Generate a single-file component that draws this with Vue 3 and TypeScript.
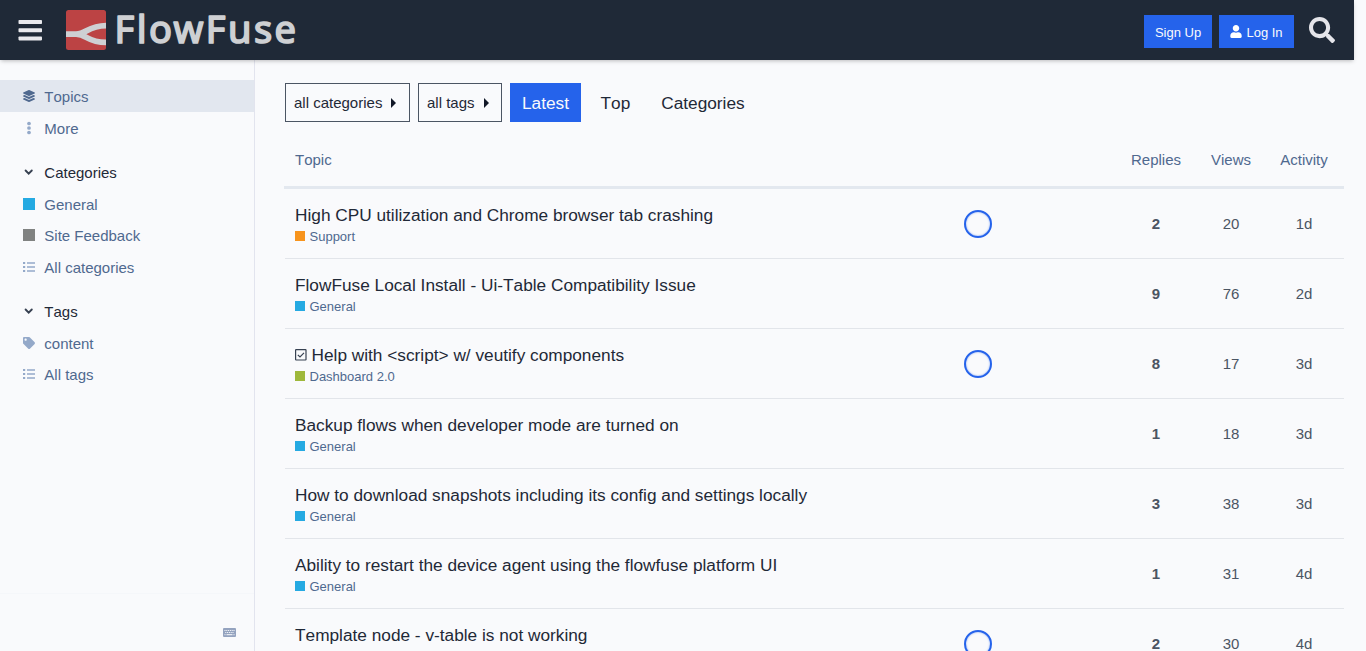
<script setup lang="ts">
interface SideLink {
  label: string
  icon: 'layers' | 'dots' | 'square' | 'list' | 'tag'
  color?: string
  active?: boolean
}
interface SideSection {
  title?: string
  links: SideLink[]
}
interface Topic {
  title: string
  category: string
  color: string
  replies: number
  views: number
  activity: string
  solved?: boolean
  poster?: boolean
}

const blue = '#25aae2'

const sections: SideSection[] = [
  {
    links: [
      { label: 'Topics', icon: 'layers', active: true },
      { label: 'More', icon: 'dots' },
    ],
  },
  {
    title: 'Categories',
    links: [
      { label: 'General', icon: 'square', color: blue },
      { label: 'Site Feedback', icon: 'square', color: '#808281' },
      { label: 'All categories', icon: 'list' },
    ],
  },
  {
    title: 'Tags',
    links: [
      { label: 'content', icon: 'tag' },
      { label: 'All tags', icon: 'list' },
    ],
  },
]

const topics: Topic[] = [
  { title: 'High CPU utilization and Chrome browser tab crashing', category: 'Support', color: '#f7941d', replies: 2, views: 20, activity: '1d', poster: true },
  { title: 'FlowFuse Local Install - Ui-Table Compatibility Issue', category: 'General', color: blue, replies: 9, views: 76, activity: '2d' },
  { title: 'Help with <script> w/ veutify components', category: 'Dashboard 2.0', color: '#9eb83b', replies: 8, views: 17, activity: '3d', solved: true, poster: true },
  { title: 'Backup flows when developer mode are turned on', category: 'General', color: blue, replies: 1, views: 18, activity: '3d' },
  { title: 'How to download snapshots including its config and settings locally', category: 'General', color: blue, replies: 3, views: 38, activity: '3d' },
  { title: 'Ability to restart the device agent using the flowfuse platform UI', category: 'General', color: blue, replies: 1, views: 31, activity: '4d' },
  { title: 'Template node - v-table is not working', category: 'General', color: blue, replies: 2, views: 30, activity: '4d', poster: true },
]
</script>

<template>
  <div class="page">
    <header class="top">
      <svg class="burger" viewBox="0 0 24 22">
        <rect x="0.5" y="1" width="23.5" height="4" rx="0.8" />
        <rect x="0.5" y="9.2" width="23.5" height="4" rx="0.8" />
        <rect x="0.5" y="17.4" width="23.5" height="4" rx="0.8" />
      </svg>
      <svg class="logo" viewBox="0 0 240 40">
        <rect width="40" height="40" rx="2.5" fill="#e84b48" />
        <path d="M0 24.200H10C20 24.200 22 15.800 40 15.600M10 24.200C21 24.200 21 32.300 40 32.300" fill="none" stroke="#fff" stroke-width="5.800" />
        <text x="48.500" y="33.300" textLength="181.500" lengthAdjust="spacing" class="wordmark">FlowFuse</text>
      </svg>
      <div class="actions">
        <button class="btn signup">Sign Up</button>
        <button class="btn login">
          <svg class="user" viewBox="0 0 448 512"><path d="M224 256c70.700 0 128-57.300 128-128S294.700 0 224 0 96 57.300 96 128s57.300 128 128 128zm89.600 32h-16.700c-22.200 10.200-46.900 16-72.900 16s-50.600-5.800-72.900-16h-16.700C60.200 288 0 348.200 0 422.400V464c0 26.500 21.500 48 48 48h352c26.500 0 48-21.500 48-48v-41.600c0-74.200-60.200-134.400-134.400-134.400z" /></svg>
          Log In
        </button>
        <svg class="search" viewBox="0 0 512 512"><path d="M505 442.700L405.300 343c-4.500-4.500-10.600-7-17-7H372c27.600-35.300 44-79.700 44-128C416 93.100 322.900 0 208 0S0 93.100 0 208s93.100 208 208 208c48.300 0 92.700-16.400 128-44v16.300c0 6.400 2.500 12.500 7 17l99.700 99.700c9.400 9.400 24.600 9.400 33.900 0l28.300-28.300c9.400-9.400 9.400-24.600.1-34zM208 336c-70.700 0-128-57.200-128-128 0-70.700 57.200-128 128-128 70.700 0 128 57.200 128 128 0 70.700-57.200 128-128 128z" /></svg>
      </div>
    </header>

    <div class="body">
      <nav class="side">
        <div v-for="(s, i) in sections" :key="i" class="section">
          <div v-if="s.title" class="item heading">
            <svg class="icon caret" viewBox="0 0 12 12"><path d="M2.600 4.500 5.700 7.600 8.800 4.500" fill="none" stroke="currentColor" stroke-width="1.900" stroke-linecap="round" /></svg>
            <span>{{ s.title }}</span>
          </div>
          <div v-for="l in s.links" :key="l.label" class="item" :class="{ active: l.active }">
            <svg v-if="l.icon === 'layers'" class="icon" viewBox="0 0 512 512"><path d="M12.410 148.020l232.940 105.670c6.800 3.090 14.490 3.090 21.290 0l232.940-105.670c16.550-7.510 16.550-32.520 0-40.030L266.650 2.310a25.607 25.607 0 0 0-21.290 0L12.410 107.980c-16.550 7.510-16.550 32.530 0 40.040zm487.180 88.280l-58.090-26.330-161.640 73.270c-7.560 3.430-15.590 5.170-23.860 5.170s-16.290-1.740-23.860-5.170L70.510 209.970l-58.100 26.330c-16.550 7.500-16.550 32.500 0 40l232.940 105.590c6.800 3.080 14.490 3.080 21.290 0L499.590 276.300c16.550-7.500 16.550-32.500 0-40zm0 127.800l-57.870-26.230-161.860 73.370c-7.560 3.430-15.590 5.170-23.860 5.170s-16.290-1.740-23.860-5.170L70.290 337.870 12.410 364.100c-16.550 7.500-16.550 32.500 0 40l232.940 105.590c6.800 3.080 14.490 3.080 21.290 0L499.590 404.100c16.550-7.500 16.550-32.500 0-40z" /></svg>
            <svg v-else-if="l.icon === 'dots'" class="icon" viewBox="0 0 12 12"><circle cx="6" cy="1.500" r="1.850" /><circle cx="6" cy="6" r="1.850" /><circle cx="6" cy="10.500" r="1.850" /></svg>
            <span v-else-if="l.icon === 'square'" class="square" :style="{ background: l.color }"></span>
            <svg v-else-if="l.icon === 'list'" class="icon" viewBox="0 0 12 12"><path d="M0 1h2.200v2H0zM0 5h2.200v2H0zM0 9h2.200v2H0zM4 1.300h8v1.400H4zM4 5.300h8v1.400H4zM4 9.300h8v1.400H4z" /></svg>
            <svg v-else class="icon" viewBox="0 0 512 512"><path d="M0 252.118V48C0 21.490 21.490 0 48 0h204.118a48 48 0 0 1 33.941 14.059l211.882 211.882c18.745 18.745 18.745 49.137 0 67.882L293.823 497.941c-18.745 18.745-49.137 18.745-67.882 0L14.059 286.059A48 48 0 0 1 0 252.118zM112 64c-26.510 0-48 21.490-48 48s21.490 48 48 48 48-21.490 48-48-21.490-48-48-48z" /></svg>
            <span>{{ l.label }}</span>
          </div>
        </div>
        <div class="side-foot">
          <svg class="keyboard" viewBox="0 0 13 9">
            <rect width="13" height="9" rx="1" />
            <path d="M1.500 2.500h10M2.300 4.500h8.700" stroke="#f9fafc" stroke-width="1" stroke-dasharray="1 .8" />
            <path d="M1.500 6.700h1M3.500 6.700h6M10.500 6.700h1" stroke="#f9fafc" stroke-width="1" />
          </svg>
        </div>
      </nav>

      <main class="main">
        <div class="filters">
          <button class="drop cats">all categories<i class="tri"></i></button>
          <button class="drop tags">all tags<i class="tri"></i></button>
          <a class="pill current">Latest</a>
          <a class="pill top-link">Top</a>
          <a class="pill">Categories</a>
        </div>
        <div class="row head">
          <span class="topic">Topic</span>
          <span></span>
          <span class="num">Replies</span>
          <span class="num">Views</span>
          <span class="num">Activity</span>
        </div>
        <div v-for="t in topics" :key="t.title" class="row entry">
          <div class="topic">
            <div class="title">
              <svg v-if="t.solved" class="check" viewBox="0 0 12 12"><rect x="0.600" y="0.600" width="10.400" height="10.400" rx="0.500" /><path d="M2.800 5.800 5 8 9 3.900" /></svg>{{ t.title }}
            </div>
            <div class="cat"><span class="badge" :style="{ background: t.color }"></span>{{ t.category }}</div>
          </div>
          <div><span v-if="t.poster" class="ring"></span></div>
          <span class="num strong">{{ t.replies }}</span>
          <span class="num">{{ t.views }}</span>
          <span class="num">{{ t.activity }}</span>
        </div>
      </main>
    </div>
  </div>
</template>

<style>
html,
body {
  background: #f9fafc;
  overflow: hidden;
}
</style>

<style scoped>
.page {
  height: 651px;
  overflow: hidden;
  display: flex;
  flex-direction: column;
  background: #f9fafc;
  color: #1f2937;
  font: 15px/1.4 'Liberation Sans', Arial, sans-serif;
  font-kerning: none;
}
.top {
  position: relative;
  flex: none;
  width: 1354px;
  height: 60px;
  box-sizing: border-box;
  padding: 0 18px;
  display: flex;
  align-items: center;
  background: #1f2937;
  box-shadow: 0 2px 4px -1px rgba(0, 0, 0, 0.25);
}
.burger {
  width: 24px;
  height: 22px;
  fill: #e9e9ed;
}
.logo {
  width: 240px;
  height: 40px;
  margin-left: 24px;
  opacity: 0.78;
  overflow: visible;
}
.wordmark {
  font: 400 38px/1 'Noto Sans', 'Open Sans', sans-serif;
  fill: #fff;
  stroke: #fff;
  stroke-width: 1.7;
  stroke-linejoin: round;
}
.actions {
  margin-left: auto;
  display: flex;
  align-items: center;
}
.btn {
  height: 33px;
  margin: 3px 7px 0 0;
  padding: 1px 0 0;
  border: 0;
  display: flex;
  align-items: center;
  justify-content: center;
  background: #2563eb;
  color: #f9fafc;
  font: 13px 'Liberation Sans', Arial, sans-serif;
}
.signup {
  width: 68px;
}
.login {
  width: 75px;
}
.user {
  width: 12px;
  height: 13px;
  margin: -2px 4px 0 0;
  fill: #fff;
}
.search {
  width: 26px;
  height: 26px;
  margin: 0 1px 0 8px;
  fill: #e5e5ea;
}
.body {
  flex: 1;
  min-height: 0;
  display: flex;
}
.side {
  width: 255px;
  box-sizing: border-box;
  padding-top: 20px;
  border-right: 1px solid #e2e4ee;
  display: flex;
  flex-direction: column;
}
.section {
  margin-bottom: 13px;
}
.item {
  height: 31.5px;
  box-sizing: border-box;
  padding: 2px 0 0 23px;
  display: flex;
  align-items: center;
  gap: 9.3px;
  color: #4f698f;
}
.item.heading {
  color: #1f2937;
}
.item.active {
  background: #e2e7ef;
}
.icon {
  width: 12px;
  height: 12px;
  margin-top: -1px;
  fill: #94a9c9;
  overflow: visible;
}
.caret {
  margin-top: -2px;
  color: #374151;
}
.active .icon {
  margin-top: -2px;
  fill: #4f698f;
}
.square {
  width: 12px;
  height: 12px;
  margin-top: -1.5px;
}
.side-foot {
  margin-top: auto;
  height: 58px;
  padding: 38px 18px 0 0;
  box-sizing: border-box;
  border-top: 1px solid #f5f7fa;
  display: flex;
  justify-content: flex-end;
}
.keyboard {
  width: 13px;
  height: 9px;
  fill: #94a3bf;
  margin-top: -4px;
}
.main {
  width: 1059px;
  padding: 23px 0 0 30px;
}
.filters {
  display: flex;
  height: 39px;
}
.drop {
  height: 39px;
  box-sizing: border-box;
  margin-right: 8px;
  padding: 0 0 0 8px;
  display: flex;
  align-items: center;
  border: 1px solid #4b5563;
  background: none;
  color: #1f2937;
  font: 15px 'Liberation Sans', Arial, sans-serif;
}
.cats {
  width: 125px;
}
.tags {
  width: 84px;
}
.tri {
  margin-left: 9px;
  border-left: 5px solid #111827;
  border-top: 5px solid transparent;
  border-bottom: 5px solid transparent;
}
.pill {
  padding: 1px 12px 0;
  display: flex;
  align-items: center;
  font-size: 17.25px;
}
.pill.current {
  width: 71px;
  box-sizing: border-box;
  background: #2563eb;
  color: #f9fafc;
}
.top-link {
  margin: 0 7px 0 7.5px;
}
.row {
  display: grid;
  grid-template-columns: 679px 155px 74px 76px 75px;
  align-items: center;
}
.head {
  height: 67px;
  margin-left: -1px;
  padding: 10px 0 0 1px;
  box-sizing: border-box;
  border-bottom: 3px solid #e3e8ef;
  color: #4f698f;
}
.entry {
  height: 70px;
  box-sizing: border-box;
  border-bottom: 1px solid #e2e5ea;
  color: #4b5563;
}
.topic {
  padding-left: 10px;
}
.entry .topic {
  padding-top: 2px;
}
.title {
  height: 25px;
  line-height: 25px;
  font-size: 17.25px;
  color: #1f2937;
  white-space: nowrap;
}
.check {
  width: 12px;
  height: 12px;
  margin-right: 4.5px;
  fill: none;
  stroke: #374151;
  stroke-width: 1.2;
}
.cat {
  height: 18px;
  display: flex;
  align-items: center;
  gap: 4.5px;
  font-size: 13px;
  color: #4f698f;
}
.badge {
  width: 10px;
  height: 10px;
  margin-top: -2px;
}
.num {
  text-align: center;
}
.num:last-child {
  padding-right: 5px;
}
.strong {
  font-weight: bold;
}
.ring {
  display: block;
  width: 28px;
  height: 28px;
  box-sizing: border-box;
  border: 2px solid #2563eb;
  border-radius: 50%;
  box-shadow: inset 0 0 2px #2563eb99;
}
</style>
